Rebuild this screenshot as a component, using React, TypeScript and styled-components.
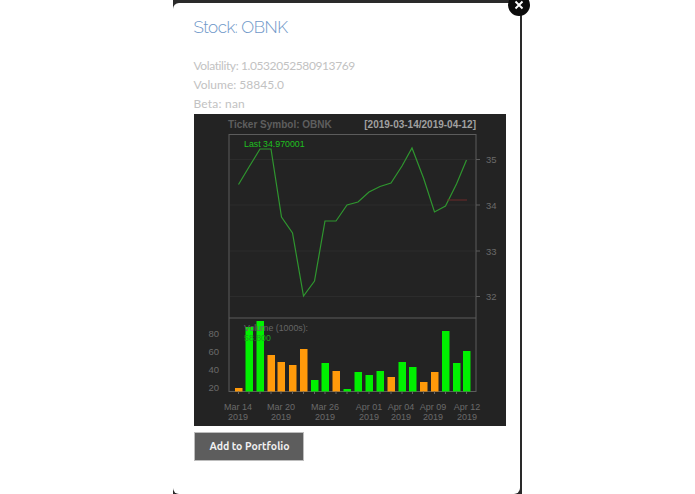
import React from "react";
import styled, { createGlobalStyle } from "styled-components";

const Global = createGlobalStyle`
  html, body { margin: 0; padding: 0; background: #fff; width: 695px; height: 494px; overflow: hidden; }
  #root { width: 695px; height: 494px; }
`;

const Page = styled.div`
  width: 695px; height: 494px; display: flex; justify-content: center; overflow: hidden; background: #fff;
  box-sizing: border-box;
`;

const Backdrop = styled.div`
  width: 349px; height: 494px; margin-left: -1px; background: #2a2a2a; position: relative; box-sizing: border-box;
  padding: 3px 2px 0 0;
`;

const Modal = styled.div`
  background: #fff; height: 491px; border-radius: 6px; box-sizing: border-box;
  padding: 14px 15px 0 21px; display: flex; flex-direction: column; align-items: flex-start;
`;

const Close = styled.div`
  position: absolute; top: -6px; right: -8px; width: 22px; height: 22px; border-radius: 50%;
  background: #0b0b0b; color: #fff; display: flex; align-items: center; justify-content: center;
`;

const Title = styled.h2`
  margin: 0 0 19px; font: 300 17px/20px "Raleway", "Lato", "Open Sans", sans-serif; color: #6f98c9;
  letter-spacing: -0.45px;
`;

const Meta = styled.p<{ $tracking?: number }>`
  margin: 0; font: 400 12px/19px "Lato", "Open Sans", sans-serif; color: #c2c2c2;
  letter-spacing: ${(p) => p.$tracking ?? 0}px;
`;

const Chart = styled.svg`
  display: block; width: 312px; height: 312px; margin-top: 1px; flex: none;
`;

const AddButton = styled.button`
  margin-top: 6px; width: 110px; height: 29px; padding: 0 0 0 2px; border: 1px solid #bdbdbd; border-radius: 0;
  background: #5d5d5d; color: #f1f1f1; font: 700 10.5px/1 "Ubuntu", "Noto Sans", sans-serif;
`;

const pts: [number, number][] = [
  [238.5,184.5],[249,167],[260,149],[271,149],[281.5,217],[292.5,233],[303.5,296],[314.5,281],[325,221],[336,221],
  [347,205],[358,202],[369,192],[380,186.5],[391,183],[402,166],[412,148],[423.5,178],[434.5,212],[445.5,206],
  [456.5,184],[466.5,160],
];

const bars: [number, number, string][] = [
  [238.5,388,"#ff9a0a"],[249,327,"#00f000"],[260,321,"#00f000"],[271,355,"#ff9a0a"],[281,362,"#ff9a0a"],
  [292.5,365,"#ff9a0a"],[303.5,349,"#ff9a0a"],[314.5,380,"#00f000"],[325,363,"#00f000"],[336,371,"#ff9a0a"],
  [347,389,"#00f000"],[358,372,"#00f000"],[369,375,"#00f000"],[380,371,"#00f000"],[391,377,"#ff9a0a"],
  [402,362,"#00f000"],[412.5,367,"#00f000"],[423.5,382,"#ff9a0a"],[434.5,372,"#ff9a0a"],[445.5,331,"#00f000"],
  [456.5,363,"#00f000"],[466.5,351,"#00f000"],
];

const xLabels: [number, string][] = [
  [238, "Mar 14"],[281, "Mar 20"],[325, "Mar 26"],[369, "Apr 01"],[401, "Apr 04"],[433, "Apr 09"],[467, "Apr 12"],
];

const OX = 194, OY = 114;

export default function App() {
  return (
    <Page>
      <Global />
      <Backdrop>
        <Modal>
          <Title>Stock: OBNK</Title>
          <Meta $tracking={-0.4}>Volatility: 1.0532052580913769</Meta>
          <Meta>Volume: 58845.0</Meta>
          <Meta $tracking={0.2}>Beta: nan</Meta>
          <Chart viewBox={`${OX} ${OY} 312 312`} fontFamily="'Liberation Sans', sans-serif">
            <rect x={OX} y={OY} width={312} height={312} fill="#232323" />
            <text x={228} y={128} fontSize={10} fontWeight={700} fill="#5e5e5e">Ticker Symbol: OBNK</text>
            <text x={476} y={128} fontSize={10} fontWeight={700} fill="#a0a0a0" textAnchor="end">[2019-03-14/2019-04-12]</text>
            <rect x={229} y={134.5} width={247} height={257} fill="none" stroke="#5c5c5c" />
            <line x1={229} x2={476} y1={318} y2={318} stroke="#5c5c5c" />
            {[159.5,205,251,296.5].map((y) => <line key={y} x1={230} x2={475} y1={y} y2={y} stroke="#2c2c2c" />)}
            {[[159.5,"35"],[205,"34"],[251,"33"],[296.5,"32"]].map(([y,t]) => (
              <g key={t as string}>
                <line x1={476} x2={480} y1={y as number} y2={y as number} stroke="#5c5c5c" />
                <text x={486} y={(y as number)+3.5} fontSize={9.5} fill="#6a6a6a">{t}</text>
              </g>
            ))}
            <polyline points={pts.map((p) => p.join(",")).join(" ")} fill="none" stroke="#2f962f" strokeWidth={1.2} />
            <line x1={447} x2={467} y1={200} y2={200} stroke="#6e2a2a" />
            <text x={244} y={147} fontSize={8.8} fill="#1fc01f">Last 34.970001</text>
            {bars.map(([x,y,c]) => <rect key={x} x={x-3.5} y={y} width={7.5} height={391.5-y} fill={c} />)}
            {bars.map(([x]) => <line key={x} x1={x} x2={x} y1={391.5} y2={394} stroke="#666" />)}
            <text x={244} y={331} fontSize={8.8} fill="#666">Volume (1000s):</text>
            <text x={244} y={341} fontSize={8.8} fill="#1fa01f">58.800</text>
            {[[333,"80"],[351,"60"],[369,"40"],[387,"20"]].map(([y,t]) => (
              <text key={t as string} x={219} y={(y as number)+3.5} fontSize={9.5} fill="#6a6a6a" textAnchor="end">{t}</text>
            ))}
            {xLabels.map(([x,t]) => (
              <text key={t} x={x} y={410} fontSize={9} fill="#6a6a6a" textAnchor="middle">
                {t}
                <tspan x={x} dy={10}>2019</tspan>
              </text>
            ))}
          </Chart>
          <AddButton>Add to Portfolio</AddButton>
        </Modal>
        <Close>
          <svg width="10" height="10" viewBox="0 0 10 10"><path d="M1.5 1.5l7 7M8.5 1.5l-7 7" stroke="#fff" strokeWidth="1.9" /></svg>
        </Close>
      </Backdrop>
    </Page>
  );
}
